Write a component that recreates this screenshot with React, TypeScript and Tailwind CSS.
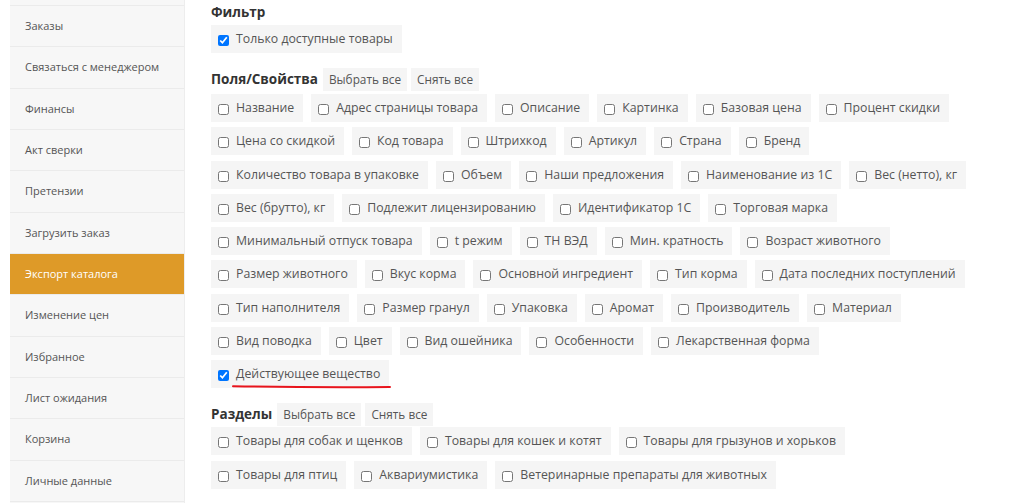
import React from "react";

const menu = [
  "Заказы",
  "Связаться с менеджером",
  "Финансы",
  "Акт сверки",
  "Претензии",
  "Загрузить заказ",
  "Экспорт каталога",
  "Изменение цен",
  "Избранное",
  "Лист ожидания",
  "Корзина",
  "Личные данные",
];

const fieldRows: string[][] = [
  ["Название", "Адрес страницы товара", "Описание", "Картинка", "Базовая цена", "Процент скидки"],
  ["Цена со скидкой", "Код товара", "Штрихкод", "Артикул", "Страна", "Бренд"],
  ["Количество товара в упаковке", "Объем", "Наши предложения", "Наименование из 1С", "Вес (нетто), кг"],
  ["Вес (брутто), кг", "Подлежит лицензированию", "Идентификатор 1С", "Торговая марка"],
  ["Минимальный отпуск товара", "t режим", "ТН ВЭД", "Мин. кратность", "Возраст животного"],
  ["Размер животного", "Вкус корма", "Основной ингредиент", "Тип корма", "Дата последних поступлений"],
  ["Тип наполнителя", "Размер гранул", "Упаковка", "Аромат", "Производитель", "Материал"],
  ["Вид поводка", "Цвет", "Вид ошейника", "Особенности", "Лекарственная форма"],
];

const sectionRows: string[][] = [
  ["Товары для собак и щенков", "Товары для кошек и котят", "Товары для грызунов и хорьков"],
  ["Товары для птиц", "Аквариумистика", "Ветеринарные препараты для животных"],
];

function Check({ label, checked, marked }: { label: string; checked?: boolean; marked?: boolean }) {
  return (
    <label className="relative flex h-[28px] shrink-0 items-center whitespace-nowrap bg-[#f5f5f5] pl-[7px] pr-[9px] text-[12.3px] text-[#555]">
      <input
        type="checkbox"
        defaultChecked={checked}
        className="mt-[3px] h-[11px] w-[11px] shrink-0"
      />
      <span className="ml-[7px] leading-5">{label}</span>
      {marked && (
        <svg
          className="pointer-events-none absolute left-[21px] top-[23px]"
          width="160"
          height="7"
          viewBox="0 0 160 7"
        >
          <path d="M1 3.2 Q 80 4.6 158 4" stroke="#e8141c" strokeWidth="2" fill="none" strokeLinecap="round" />
        </svg>
      )}
    </label>
  );
}

function Heading({ title }: { title: string }) {
  return (
    <div className="flex h-[23px] items-center gap-[4px]">
      <span className="mr-[1px] text-[13.5px] font-bold text-[#333]">{title}</span>
      <button className="h-[23px] whitespace-nowrap bg-[#f5f5f5] px-[6px] text-[11.8px] text-[#555]">Выбрать все</button>
      <button className="h-[23px] whitespace-nowrap bg-[#f5f5f5] px-[6px] text-[11.8px] text-[#555]">Снять все</button>
    </div>
  );
}

export default function App() {
  return (
    <div
      className="flex h-[503px] w-[1024px] overflow-hidden bg-white"
      style={{ fontFamily: '"Open Sans", "Liberation Sans", sans-serif' }}
    >
      {/* Sidebar */}
      <div className="ml-[10px] w-[175px] shrink-0 border-r border-[#ededed] bg-[#f7f7f7]">
        <div className="h-[6px] border-b border-[#ebebeb]" />
        {menu.map((item) => {
          const active = item === "Экспорт каталога";
          return (
            <div
              key={item}
              className={
                active
                  ? "flex h-[41.33px] items-center border-b border-[#ebebeb] bg-[#de9a28] pl-[15px] text-[11px] text-white"
                  : "flex h-[41.33px] items-center border-b border-[#ebebeb] pl-[15px] text-[11px] text-[#555]"
              }
            >
              {item}
            </div>
          );
        })}
      </div>

      {/* Main */}
      <div className="ml-[26px] flex-1 pt-[2px]">
        <div className="h-5 text-[13.5px] font-bold leading-5 text-[#333]">Фильтр</div>
        <div className="mt-[3px] flex">
          <Check label="Только доступные товары" checked />
        </div>

        <div className="mt-[15px]">
          <Heading title="Поля/Свойства" />
        </div>
        <div className="mt-[3px] flex flex-col gap-y-[5.25px]">
          {fieldRows.map((row, i) => (
            <div key={i} className="flex gap-x-[8px]">
              {row.map((f) => (
                <Check key={f} label={f} />
              ))}
            </div>
          ))}
          <div className="flex">
            <Check label="Действующее вещество" checked marked />
          </div>
        </div>

        <div className="mt-[15px]">
          <Heading title="Разделы" />
        </div>
        <div className="mt-[1px] flex flex-col gap-y-[6px]">
          {sectionRows.map((row, i) => (
            <div key={i} className="flex gap-x-[8px]">
              {row.map((f) => (
                <Check key={f} label={f} />
              ))}
            </div>
          ))}
        </div>
      </div>
    </div>
  );
}
